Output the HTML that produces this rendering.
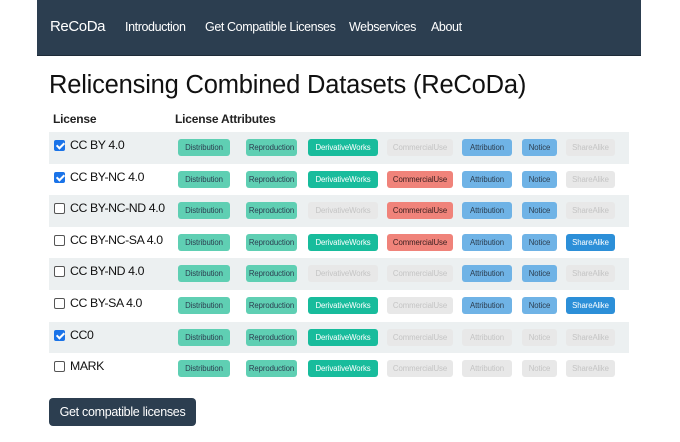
<!DOCTYPE html>
<html><head><style>
*{margin:0;padding:0;box-sizing:border-box}
body{width:680px;height:442px;background:#fff;font-family:"Liberation Sans",sans-serif;color:#222;position:relative;overflow:hidden}
.nav{position:absolute;left:37px;top:0;width:604px;height:56px;background:#2c3e50;border-bottom:1px solid #1e2b38}
.nav span{position:absolute;top:20px;color:#fff;font-size:12.5px;letter-spacing:-0.4px;white-space:nowrap}
h1{position:absolute;left:49px;top:71px;font-size:25.5px;font-weight:normal;color:#111;white-space:nowrap;letter-spacing:-0.2px}
.th{position:absolute;top:112px;font-size:12px;font-weight:bold;letter-spacing:-0.2px}
.row{position:absolute;left:49px;width:580px;height:31.6px}
.row.s{background:#ecf0f1}
.cb{position:absolute;left:5px;top:8px;width:11px;height:11px;border:1px solid #555;border-radius:2px;background:#fff}
.cb.on{background:#1a73e8;border-color:#1a73e8}
.cb.on::after{content:"";position:absolute;left:3px;top:0px;width:3px;height:6px;border:solid #fff;border-width:0 2px 2px 0;transform:rotate(45deg)}
.lab{position:absolute;left:21px;top:6px;font-size:12.3px;letter-spacing:-0.4px;color:#111;white-space:nowrap}
.b{position:absolute;top:7px;height:17px;border-radius:3px;font-size:7.8px;letter-spacing:-0.1px;line-height:17px;text-align:center;color:#2c3e50;white-space:nowrap}
.d{left:129px;width:52px;background:#5fcfb3}
.r{left:197px;width:51px;background:#5fcfb3}
.w{left:259px;width:70px}
.c{left:338px;width:66px}
.a{left:413px;width:50px}
.n{left:473px;width:35px}
.sa{left:517px;width:49px}
.g{background:#e8e8e8;color:#c4c4c4}
.dw{background:#18bc9c;color:#fff}
.red{background:#f0837a;color:#3a2020}
.bl{background:#6fb3e6}
.bd{background:#2c8fd8;color:#fff}
.btn{position:absolute;left:49px;top:398px;width:147px;height:28px;background:#2c3e50;border-radius:4px;color:#fff;font-size:12.5px;letter-spacing:-0.3px;line-height:28px;text-align:center}
</style></head><body>
<div class="nav">
<span style="left:13px;font-size:15px;top:18px">ReCoDa</span>
<span style="left:88px">Introduction</span>
<span style="left:168px">Get Compatible Licenses</span>
<span style="left:312px">Webservices</span>
<span style="left:394px">About</span>
</div>
<h1>Relicensing Combined Datasets (ReCoDa)</h1>
<div class="th" style="left:53px">License</div>
<div class="th" style="left:175px">License Attributes</div>

<div class="row s" style="top:132px"><div class="cb on"></div><div class="lab">CC BY 4.0</div>
<div class="b d">Distribution</div><div class="b r">Reproduction</div><div class="b w dw">DerivativeWorks</div><div class="b c g">CommercialUse</div><div class="b a bl">Attribution</div><div class="b n bl">Notice</div><div class="b sa g">ShareAlike</div></div>

<div class="row" style="top:163.6px"><div class="cb on"></div><div class="lab">CC BY-NC 4.0</div>
<div class="b d">Distribution</div><div class="b r">Reproduction</div><div class="b w dw">DerivativeWorks</div><div class="b c red">CommercialUse</div><div class="b a bl">Attribution</div><div class="b n bl">Notice</div><div class="b sa g">ShareAlike</div></div>

<div class="row s" style="top:195.2px"><div class="cb"></div><div class="lab">CC BY-NC-ND 4.0</div>
<div class="b d">Distribution</div><div class="b r">Reproduction</div><div class="b w g">DerivativeWorks</div><div class="b c red">CommercialUse</div><div class="b a bl">Attribution</div><div class="b n bl">Notice</div><div class="b sa g">ShareAlike</div></div>

<div class="row" style="top:226.8px"><div class="cb"></div><div class="lab">CC BY-NC-SA 4.0</div>
<div class="b d">Distribution</div><div class="b r">Reproduction</div><div class="b w dw">DerivativeWorks</div><div class="b c red">CommercialUse</div><div class="b a bl">Attribution</div><div class="b n bl">Notice</div><div class="b sa bd">ShareAlike</div></div>

<div class="row s" style="top:258.4px"><div class="cb"></div><div class="lab">CC BY-ND 4.0</div>
<div class="b d">Distribution</div><div class="b r">Reproduction</div><div class="b w g">DerivativeWorks</div><div class="b c g">CommercialUse</div><div class="b a bl">Attribution</div><div class="b n bl">Notice</div><div class="b sa g">ShareAlike</div></div>

<div class="row" style="top:290px"><div class="cb"></div><div class="lab">CC BY-SA 4.0</div>
<div class="b d">Distribution</div><div class="b r">Reproduction</div><div class="b w dw">DerivativeWorks</div><div class="b c g">CommercialUse</div><div class="b a bl">Attribution</div><div class="b n bl">Notice</div><div class="b sa bd">ShareAlike</div></div>

<div class="row s" style="top:321.6px"><div class="cb on"></div><div class="lab">CC0</div>
<div class="b d">Distribution</div><div class="b r">Reproduction</div><div class="b w dw">DerivativeWorks</div><div class="b c g">CommercialUse</div><div class="b a g">Attribution</div><div class="b n g">Notice</div><div class="b sa g">ShareAlike</div></div>

<div class="row" style="top:353.2px"><div class="cb"></div><div class="lab">MARK</div>
<div class="b d">Distribution</div><div class="b r">Reproduction</div><div class="b w dw">DerivativeWorks</div><div class="b c g">CommercialUse</div><div class="b a g">Attribution</div><div class="b n g">Notice</div><div class="b sa g">ShareAlike</div></div>

<div class="btn">Get compatible licenses</div>
</body></html>
